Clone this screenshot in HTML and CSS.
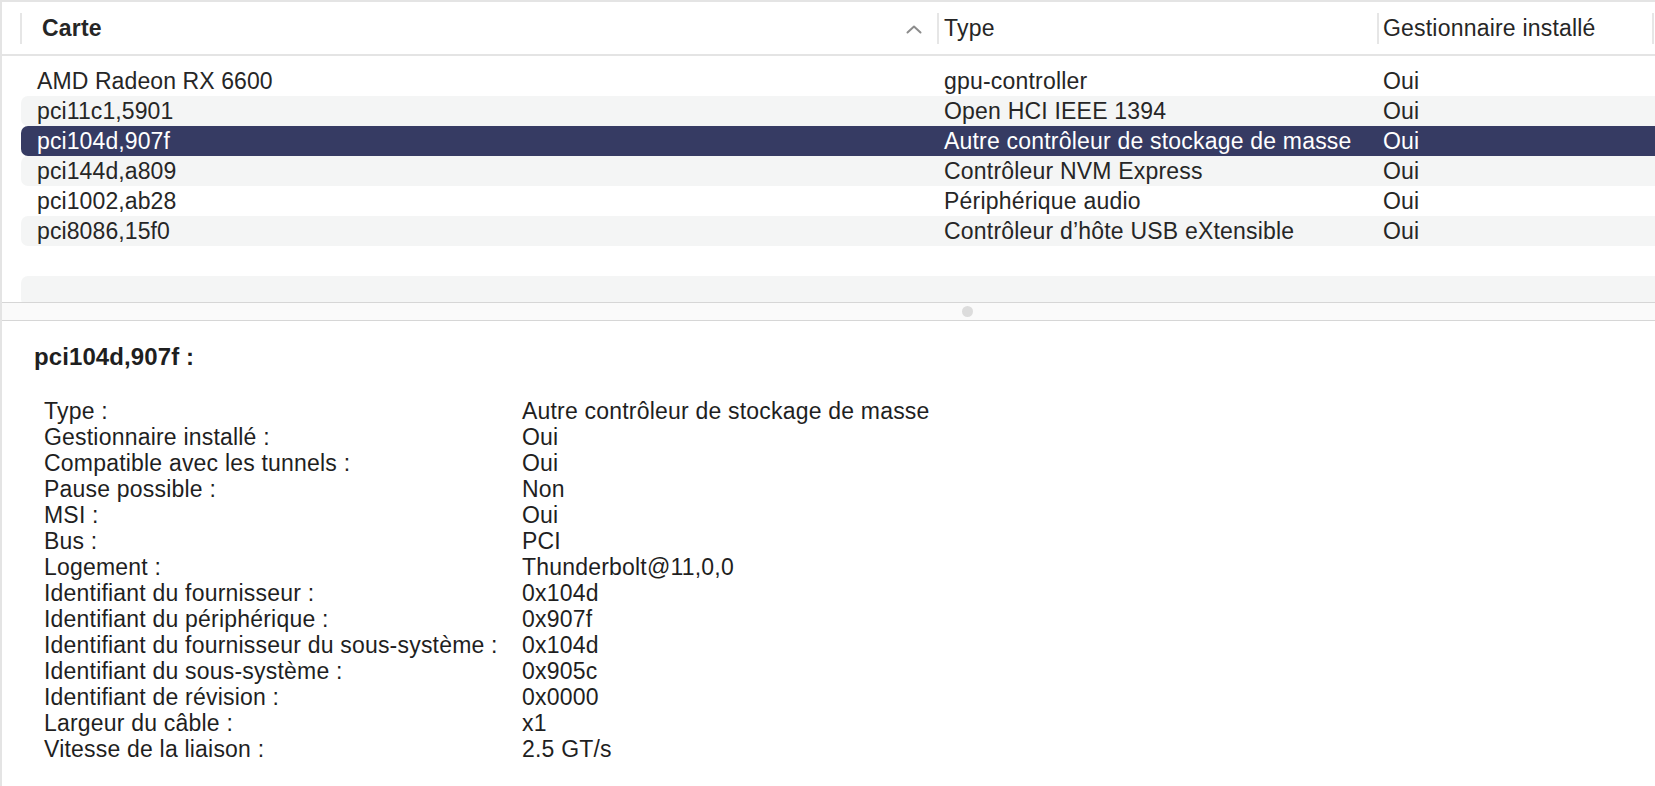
FILE: index.html
```html
<!DOCTYPE html>
<html>
<head>
  <link rel="stylesheet" href="styles.css">
</head>
<body>
  <div class="window">
    <div class="list">
      <div class="list-header">
        <div class="col-head sorted">
          <span>Carte</span>
          <svg class="chevron" width="16" height="9" viewBox="0 0 16 9"><path d="M1.5 7.5 L8 1.5 L14.5 7.5" fill="none" stroke="#8c8c8c" stroke-width="2" stroke-linecap="round" stroke-linejoin="round"/></svg>
        </div>
        <div class="col-head">Type</div>
        <div class="col-head">Gestionnaire installé</div>
        <div class="col-head"></div>
      </div>
      <div class="rows">
        <div class="row"><div class="cell">AMD Radeon RX 6600</div><div class="cell">gpu-controller</div><div class="cell">Oui</div></div>
        <div class="row"><div class="cell">pci11c1,5901</div><div class="cell">Open HCI IEEE 1394</div><div class="cell">Oui</div></div>
        <div class="row selected"><div class="cell">pci104d,907f</div><div class="cell">Autre contrôleur de stockage de masse</div><div class="cell">Oui</div></div>
        <div class="row"><div class="cell">pci144d,a809</div><div class="cell">Contrôleur NVM Express</div><div class="cell">Oui</div></div>
        <div class="row"><div class="cell">pci1002,ab28</div><div class="cell">Périphérique audio</div><div class="cell">Oui</div></div>
        <div class="row"><div class="cell">pci8086,15f0</div><div class="cell">Contrôleur d’hôte USB eXtensible</div><div class="cell">Oui</div></div>
        <div class="row"></div>
        <div class="row"></div>
      </div>
    </div>

    <div class="splitter"><span class="grip"></span></div>

    <div class="details">
      <div class="details-title">pci104d,907f :</div>
      <div class="props">
        <div>Type :</div><div>Autre contrôleur de stockage de masse</div>
        <div>Gestionnaire installé :</div><div>Oui</div>
        <div>Compatible avec les tunnels :</div><div>Oui</div>
        <div>Pause possible :</div><div>Non</div>
        <div>MSI :</div><div>Oui</div>
        <div>Bus :</div><div>PCI</div>
        <div>Logement :</div><div>Thunderbolt@11,0,0</div>
        <div>Identifiant du fournisseur :</div><div>0x104d</div>
        <div>Identifiant du périphérique :</div><div>0x907f</div>
        <div>Identifiant du fournisseur du sous-système :</div><div>0x104d</div>
        <div>Identifiant du sous-système :</div><div>0x905c</div>
        <div>Identifiant de révision :</div><div>0x0000</div>
        <div>Largeur du câble :</div><div>x1</div>
        <div>Vitesse de la liaison :</div><div>2.5 GT/s</div>
      </div>
    </div>
  </div>
</body>
</html>
```

FILE: styles.css
```css
body {
  margin: 0;
  font-family: "Liberation Sans", Arial, sans-serif;
  font-size: 23px;
  letter-spacing: 0.2px;
  color: #262626;
  background: #fff;
  width: 1655px;
  height: 786px;
  overflow: hidden;
}
.window {
  border-top: 2px solid #e4e4e4;
  border-left: 2px solid #e4e4e4;
  height: 784px;
}
.list-header {
  display: grid;
  grid-template-columns: 917px 440px 275px 1fr;
  align-items: center;
  height: 52px;
  padding-left: 18px;
  border-bottom: 2px solid #e4e4e4;
}
.col-head {
  display: flex;
  align-items: center;
  height: 31px;
  border-left: 2px solid #e6e6e6;
  padding-left: 5px;
  white-space: nowrap;
}
.col-head:nth-child(3) {
  padding-left: 4px;
}
.col-head.sorted {
  justify-content: space-between;
  padding-left: 20px;
  padding-right: 15px;
  font-weight: bold;
}
.chevron {
  margin-top: 2px;
}
.rows {
  height: 236px;
  padding-top: 10px;
  margin-left: 19px;
  overflow: hidden;
}
.row {
  display: grid;
  grid-template-columns: 916px 440px 1fr;
  height: 30px;
  line-height: 30px;
  border-radius: 7px 0 0 7px;
  white-space: nowrap;
  letter-spacing: 0.1px;
}
.row:nth-child(even) {
  background: #f4f5f5;
}
.row.selected {
  background: #363b63;
  color: #fff;
}
.cell:nth-child(1) {
  padding-left: 16px;
}
.cell:nth-child(2) {
  padding-left: 7px;
  letter-spacing: 0.2px;
}
.cell:nth-child(3) {
  padding-left: 6px;
}
.splitter {
  display: flex;
  align-items: center;
  height: 17px;
  padding-left: 960px;
  background: #fafafa;
  border-top: 1px solid #d6d6d6;
  border-bottom: 1px solid #d6d6d6;
}
.grip {
  width: 11px;
  height: 11px;
  border-radius: 50%;
  background: #dcdcdc;
}
.details {
  padding: 23px 0 0 32px;
  color: #1f1f1f;
}
.details-title {
  font-weight: bold;
  font-size: 24px;
  letter-spacing: 0.1px;
  line-height: 26px;
}
.props {
  display: grid;
  grid-template-columns: 478px 1fr;
  margin-top: 28px;
  padding-left: 10px;
  line-height: 26px;
  white-space: nowrap;
}
```
